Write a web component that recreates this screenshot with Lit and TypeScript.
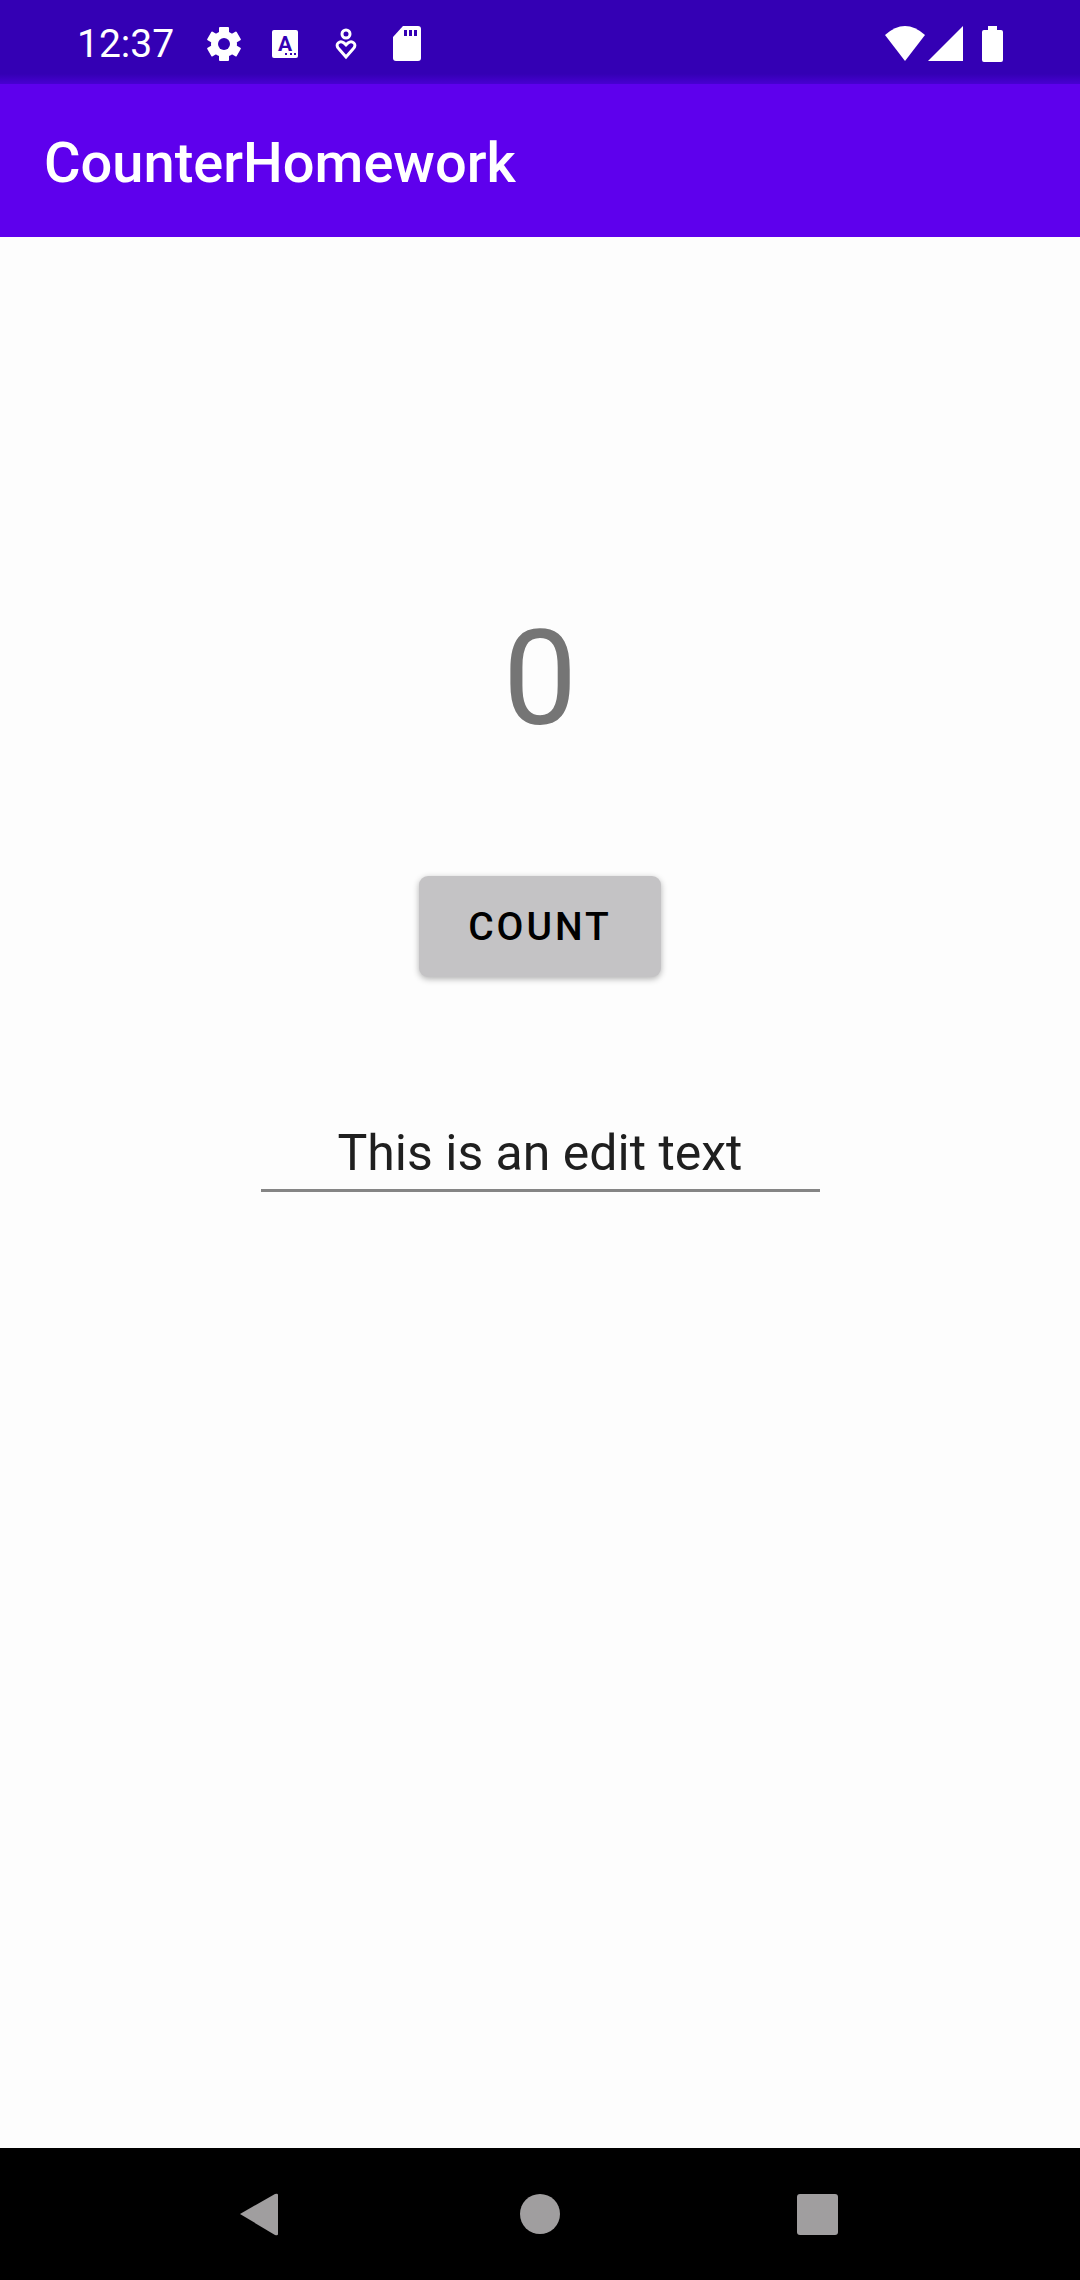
import { LitElement, html, css, svg } from "lit";
import { customElement, state } from "lit/decorators.js";

@customElement("status-bar")
class StatusBar extends LitElement {
  static styles = css`
    :host {
      display: block;
      background: linear-gradient(#3400b4 88%, #4800d2);
      color: #fff;
    }
    .bar {
      display: flex;
      align-items: center;
      justify-content: space-between;
      height: 84px;
      padding: 4px 65px 0 77px;
      box-sizing: border-box;
    }
    .left {
      display: flex;
      align-items: center;
    }
    .clock {
      font-size: 39px;
      line-height: 48px;
      margin-right: 30px;
    }
    .notes {
      display: flex;
      gap: 21px;
    }
    .system {
      display: flex;
    }
    svg {
      display: block;
      width: 40px;
      height: 40px;
      fill: #fff;
    }
    .system svg {
      width: 44px;
      height: 44px;
    }
    .letter {
      font: 700 21px Roboto, "Liberation Sans", sans-serif;
      text-anchor: middle;
      fill: #3400b4;
    }
    .cut {
      fill: #3400b4;
    }
  `;

  render() {
    return html`
      <div class="bar">
        <div class="left">
          <time class="clock">12:37</time>
          <div class="notes">
            <svg viewBox="0 0 40 40" aria-hidden="true">
              <circle cx="20" cy="20" r="13" />
              ${[0, 60, 120].map(
                (angle) => svg`
                  <rect x="15" y="3" width="10" height="34" rx="1" transform="rotate(${angle} 20 20)" />
                `
              )}
              <circle class="cut" cx="20" cy="20" r="6" />
            </svg>
            <svg viewBox="0 0 40 40" aria-hidden="true">
              <rect x="7" y="6" width="26" height="28" rx="2" />
              <text class="letter" x="20" y="27">A</text>
              <path class="cut" d="M20 29h2v2h-2zM25 29h2v2h-2zM29 29h2v2h-2z" />
            </svg>
            <svg viewBox="0 0 40 40" aria-hidden="true">
              <g fill="none" stroke="#fff" stroke-width="3">
                <circle cx="20" cy="10" r="4" />
                <path
                  d="M20 33l-7-8c-5-5 1-9 5-6l2 2 2-2c4-3 10 1 5 6z"
                />
              </g>
            </svg>
            <svg viewBox="0 0 40 40" aria-hidden="true">
              <path
                d="M16 2h15q3 0 3 3v29q0 3-3 3H9q-3 0-3-3V13z"
              />
              <path class="cut" d="M17 6h3v6h-3zM22 6h3v6h-3zM27 6h3v6h-3z" />
            </svg>
          </div>
        </div>
        <div class="system">
          <svg viewBox="0 0 44 44" aria-hidden="true">
            <path d="M2 13Q22-5 42 13L22 39z" />
          </svg>
          <svg viewBox="0 0 44 44" aria-hidden="true">
            <path d="M1 39L36 4v35z" />
          </svg>
          <svg viewBox="0 0 44 44" aria-hidden="true">
            <path d="M17 4h9v4h4q2 0 2 2v28q0 2-2 2H13q-2 0-2-2V10q0-2 2-2h4z" />
          </svg>
        </div>
      </div>
    `;
  }
}

@customElement("navigation-bar")
class NavigationBar extends LitElement {
  static styles = css`
    :host {
      display: block;
      background: #000;
    }
    .bar {
      display: flex;
      justify-content: center;
      gap: 146px;
      height: 132px;
    }
    button {
      display: flex;
      align-items: center;
      justify-content: center;
      width: 132px;
      padding: 0;
      border: 0;
      background: none;
    }
    svg {
      width: 44px;
      height: 44px;
      fill: #a09e9f;
    }
  `;

  render() {
    const item = (label: string, shape: unknown) => html`
      <button aria-label=${label}>
        <svg viewBox="0 0 44 44" aria-hidden="true">${shape}</svg>
      </button>
    `;
    return html`
      <nav class="bar">
        ${item("Back", svg`<path d="M0 22L35 2q3-1 3 1v39q0 2-3 1z" />`)}
        ${item("Home", svg`<circle cx="22" cy="22" r="20" />`)}
        ${item("Recent apps", svg`<rect x="1" y="2" width="41" height="41" rx="3" />`)}
      </nav>
    `;
  }
}

@customElement("app-root")
class AppRoot extends LitElement {
  static styles = css`
    :host {
      display: flex;
      flex-direction: column;
      min-height: 100vh;
      background: #fdfdfd;
      font-family: Roboto, "Liberation Sans", sans-serif;
    }
    header {
      display: flex;
      align-items: center;
      height: 153px;
      padding: 4px 44px 0;
      box-sizing: border-box;
      background: #5e00ed;
      color: #fff;
    }
    h1 {
      margin: 0;
      font-size: 56px;
      line-height: 64px;
      font-weight: 500;
    }
    main {
      flex: 1;
      display: flex;
      flex-direction: column;
      align-items: center;
      padding-top: 354px;
    }
    .value {
      font-size: 132px;
      line-height: 176px;
      color: #757575;
    }
    .count {
      margin-top: 109px;
      height: 101px;
      padding: 0 49px;
      border: 0;
      border-radius: 9px;
      background: #c4c3c5;
      box-shadow: 0 2px 6px rgba(0, 0, 0, 0.3);
      color: #000;
      font: 500 39px/48px Roboto, "Liberation Sans", sans-serif;
      letter-spacing: 3px;
      text-transform: uppercase;
    }
    .note {
      width: 559px;
      max-width: 90%;
      box-sizing: border-box;
      margin-top: 139px;
      padding: 8px 0 7px;
      border: 0;
      border-bottom: 3px solid #858585;
      background: none;
      color: #1f1f1f;
      font: 400 50px/58px Roboto, "Liberation Sans", sans-serif;
      text-align: center;
      outline: none;
    }
  `;

  @state() private count = 0;

  render() {
    return html`
      <status-bar></status-bar>
      <header><h1>CounterHomework</h1></header>
      <main>
        <output class="value">${this.count}</output>
        <button class="count" @click=${() => this.count++}>Count</button>
        <input
          class="note"
          type="text"
          aria-label="Edit text"
          value="This is an edit text"
        />
      </main>
      <navigation-bar></navigation-bar>
    `;
  }
}
